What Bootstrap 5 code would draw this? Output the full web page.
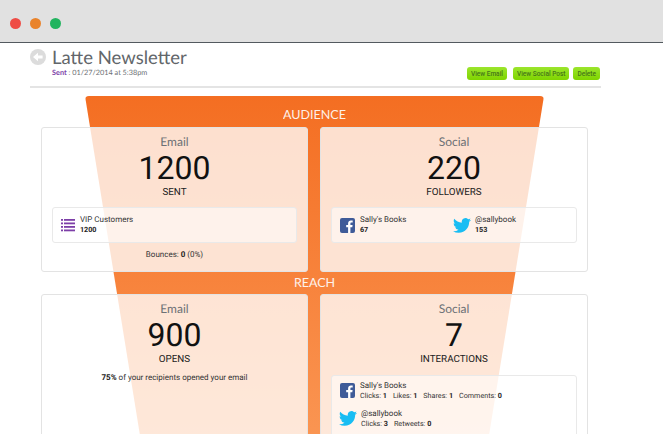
<!DOCTYPE html>
<html lang="en">
<head>
    <meta charset="UTF-8">
    <meta name="viewport" content="width=device-width, initial-scale=1.0">
    <title>Latte Newsletter</title>
    <link href="https://cdn.jsdelivr.net/npm/bootstrap@5.3.0/dist/css/bootstrap.min.css" rel="stylesheet">
    <style>
        html, body {
            height: 434px;
            overflow: hidden;
        }

        body {
            background: #fff;
            font-family: Roboto, sans-serif;
            font-size: 8px;
            color: #333;
            text-rendering: geometricPrecision;
        }

        .window-bar {
            height: 43px;
            background: #e1e1e1;
            border-bottom: 1.5px solid #535a5f;
            padding-left: 10px;
            gap: 9px;
        }

        .window-dot {
            width: 11px;
            height: 11px;
            border-radius: 50%;
            margin-top: 4px;
        }

        .page-head {
            width: 571px;
            height: 45px;
            margin-left: 30px;
            border-bottom: 2px solid #e4e4e4;
        }

        .back-icon {
            flex: none;
            margin: 6px 6px 0 0;
        }

        .title-block {
            padding-top: 3px;
        }

        .news-title {
            font-family: Lato, sans-serif;
            font-size: 18.500px;
            font-weight: 400;
            line-height: 22px;
            color: #62666a;
            margin: 0;
        }

        .sent-line {
            font-family: Lato, sans-serif;
            font-size: 7.300px;
            line-height: 10px;
            color: #6c7074;
        }

        .sent-word {
            color: #7d3fa8;
            font-weight: 700;
        }

        .head-actions {
            padding: 0 1px 6px 0;
            gap: 4px;
        }

        .head-btn {
            font-size: 6.500px;
            font-weight: 500;
            line-height: 12px;
            height: 13px;
            padding: 0 4px;
            border-radius: 3px;
            border: 0;
            color: #47761a;
            background: linear-gradient(#9be52c, #7fd400);
        }

        .head-btn.first-btn {
            margin-right: 2px;
        }

        .funnel-wrap {
            position: relative;
            margin: 8px 0 0 41px;
            width: 547px;
        }

        .funnel-shape {
            position: absolute;
            left: 44px;
            top: 0;
            width: 459px;
            height: 340px;
            background: linear-gradient(#f46e22, #fa9552);
            clip-path: polygon(0 0, 100% 0, 88% 100%, 12% 100%);
            border-radius: 4px 4px 0 0;
        }

        .stage-label {
            position: relative;
            font-family: Lato, sans-serif;
            font-size: 12.500px;
            line-height: 24px;
            height: 31px;
            padding-top: 7px;
            color: #fff;
            text-align: center;
            opacity: .9;
        }

        .stage-label.between {
            height: 22px;
            line-height: 22px;
            padding-top: 0;
        }

        .stage-row {
            position: relative;
            display: grid;
            grid-template-columns: 267px 268px;
            gap: 12px;
        }

        .stat-box {
            height: 145px;
            background: rgba(255, 255, 255, .78);
            border: 1px solid #e3e3e3;
            border-radius: 3px;
            padding: 6px 10px 0;
            text-align: center;
        }

        .stat-box.tall {
            height: 200px;
        }

        .box-head {
            font-family: Lato, sans-serif;
            font-size: 12px;
            line-height: 16px;
            color: #6d7175;
        }

        .box-num {
            font-size: 32px;
            line-height: 35px;
            color: #111;
            margin-top: 1px;
        }

        .box-unit {
            font-size: 9.800px;
            line-height: 12px;
            color: #222;
            margin-top: 1px;
        }

        .box-note {
            color: #333;
            line-height: 12px;
            margin-top: 6px;
        }

        .inner-panel {
            height: 36px;
            background: rgba(255, 255, 255, .55);
            border: 1px solid #e9e9e9;
            border-radius: 3px;
            text-align: left;
            margin-top: 8px;
            line-height: 10px;
            padding-left: 8px;
        }

        .inner-panel.stack {
            display: block;
            padding: 4.500px 8px 0;
            margin-top: 9px;
            height: 70px;
        }

        .net-cell {
            width: 113px;
        }

        .panel-icon {
            flex: none;
            margin-right: 5px;
        }

        .bird-icon {
            margin-right: 4px;
        }

        .sub-line {
            font-size: 7.200px;
        }

        .num-strong {
            font-weight: 700;
            color: #222;
        }

        .stat-pair {
            margin-right: 6px;
        }
    </style>
</head>
<body>

<div class="window-bar d-flex align-items-center">
    <span class="window-dot" style="background:#ee4c45"></span>
    <span class="window-dot" style="background:#e9832b"></span>
    <span class="window-dot" style="background:#22b45f"></span>
</div>

<div class="page-head d-flex justify-content-between">
    <div class="d-flex">
        <svg class="back-icon" width="16" height="16" viewBox="0 0 16 16">
            <circle cx="8" cy="8" r="8" fill="#dcdcdc"/>
            <path d="M3 8l5-4.200v2.600h4.600v3.200H8v2.600z" fill="#fff"/>
        </svg>
        <div class="title-block">
            <h1 class="news-title">Latte Newsletter</h1>
            <div class="sent-line"><span class="sent-word">Sent</span> : 01/27/2014 at 5:38pm</div>
        </div>
    </div>
    <div class="head-actions d-flex align-items-end">
        <button class="btn head-btn first-btn">View Email</button>
        <button class="btn head-btn">View Social Post</button>
        <button class="btn head-btn">Delete</button>
    </div>
</div>

<div class="funnel-wrap">
    <div class="funnel-shape"></div>

    <div class="stage-label">AUDIENCE</div>
    <div class="stage-row">
        <div class="stat-box">
            <div class="box-head">Email</div>
            <div class="box-num">1200</div>
            <div class="box-unit">SENT</div>
            <div class="inner-panel d-flex align-items-center">
                <svg class="panel-icon" width="14" height="14" viewBox="0 0 14 14" fill="#7d3fa8">
                    <rect x="0" y="1" width="2" height="1.800"/><rect x="3" y="1" width="11" height="1.800"/>
                    <rect x="0" y="4.500" width="2" height="1.800"/><rect x="3" y="4.500" width="11" height="1.800"/>
                    <rect x="0" y="8" width="2" height="1.800"/><rect x="3" y="8" width="11" height="1.800"/>
                    <rect x="0" y="11.500" width="2" height="1.800"/><rect x="3" y="11.500" width="11" height="1.800"/>
                </svg>
                <div>VIP Customers<br><span class="num-strong sub-line">1200</span></div>
            </div>
            <div class="box-note">Bounces: <span class="num-strong">0</span> (0%)</div>
        </div>
        <div class="stat-box">
            <div class="box-head">Social</div>
            <div class="box-num">220</div>
            <div class="box-unit">FOLLOWERS</div>
            <div class="inner-panel d-flex align-items-center">
                <div class="net-cell d-flex align-items-center">
                    <svg class="panel-icon" width="15" height="15" viewBox="0 0 15 15">
                        <rect width="15" height="15" rx="2" fill="#3f5b98"/>
                        <path d="M10.400 15V9.200h1.900l.3-2.200h-2.200V5.600c0-.7.200-1.100 1.100-1.100h1.200V2.500c-.2 0-.9-.1-1.700-.1-1.700 0-2.900 1-2.900 3V7H6.200v2.200h1.900V15z" fill="#fff"/>
                    </svg>
                    <div>Sally's Books<br><span class="num-strong sub-line">67</span></div>
                </div>
                <div class="d-flex align-items-center">
                    <svg class="panel-icon bird-icon" width="18" height="15" viewBox="0 0 24 20">
                        <path d="M23.953 2.570a10 10 0 01-2.825.775 4.958 4.958 0 002.163-2.723c-.951.555-2.005.959-3.127 1.184a4.920 4.920 0 00-8.384 4.482C7.690 6.095 4.067 4.130 1.640 1.162a4.822 4.822 0 00-.666 2.475c0 1.710.870 3.213 2.188 4.096a4.904 4.904 0 01-2.228-.616v.060a4.923 4.923 0 003.946 4.827 4.996 4.996 0 01-2.212.085 4.936 4.936 0 004.604 3.417 9.867 9.867 0 01-6.102 2.105c-.390 0-.779-.023-1.170-.067a13.995 13.995 0 007.557 2.209c9.053 0 13.998-7.496 13.998-13.985 0-.210 0-.420-.015-.630A9.935 9.935 0 0024 2.590z" fill="#19bdf3"/>
                    </svg>
                    <div>@sallybook<br><span class="num-strong sub-line">153</span></div>
                </div>
            </div>
        </div>
    </div>

    <div class="stage-label between">REACH</div>
    <div class="stage-row">
        <div class="stat-box tall">
            <div class="box-head">Email</div>
            <div class="box-num">900</div>
            <div class="box-unit">OPENS</div>
            <div class="box-note"><span class="num-strong">75%</span> of your recipients opened your email</div>
        </div>
        <div class="stat-box tall">
            <div class="box-head">Social</div>
            <div class="box-num">7</div>
            <div class="box-unit">INTERACTIONS</div>
            <div class="inner-panel stack">
                <div class="d-flex align-items-center mb-2">
                    <svg class="panel-icon" width="15" height="15" viewBox="0 0 15 15">
                        <rect width="15" height="15" rx="2" fill="#3f5b98"/>
                        <path d="M10.400 15V9.200h1.900l.3-2.200h-2.200V5.600c0-.7.200-1.100 1.100-1.100h1.200V2.500c-.2 0-.9-.1-1.700-.1-1.700 0-2.900 1-2.900 3V7H6.200v2.200h1.900V15z" fill="#fff"/>
                    </svg>
                    <div>Sally's Books<br><span class="sub-line"><span class="stat-pair">Clicks: <span class="num-strong">1</span></span><span class="stat-pair">Likes: <span class="num-strong">1</span></span><span class="stat-pair">Shares: <span class="num-strong">1</span></span><span class="stat-pair">Comments: <span class="num-strong">0</span></span></span></div>
                </div>
                <div class="d-flex align-items-center">
                    <svg class="panel-icon bird-icon" width="18" height="15" viewBox="0 0 24 20" style="margin-left:-1px">
                        <path d="M23.953 2.570a10 10 0 01-2.825.775 4.958 4.958 0 002.163-2.723c-.951.555-2.005.959-3.127 1.184a4.920 4.920 0 00-8.384 4.482C7.690 6.095 4.067 4.130 1.640 1.162a4.822 4.822 0 00-.666 2.475c0 1.710.870 3.213 2.188 4.096a4.904 4.904 0 01-2.228-.616v.060a4.923 4.923 0 003.946 4.827 4.996 4.996 0 01-2.212.085 4.936 4.936 0 004.604 3.417 9.867 9.867 0 01-6.102 2.105c-.390 0-.779-.023-1.170-.067a13.995 13.995 0 007.557 2.209c9.053 0 13.998-7.496 13.998-13.985 0-.210 0-.420-.015-.630A9.935 9.935 0 0024 2.590z" fill="#19bdf3"/>
                    </svg>
                    <div>@sallybook<br><span class="sub-line"><span class="stat-pair">Clicks: <span class="num-strong">3</span></span><span class="stat-pair">Retweets: <span class="num-strong">0</span></span></span></div>
                </div>
            </div>
        </div>
    </div>
</div>

<script src="https://cdn.jsdelivr.net/npm/bootstrap@5.3.0/dist/js/bootstrap.bundle.min.js"></script>
</body>
</html>
